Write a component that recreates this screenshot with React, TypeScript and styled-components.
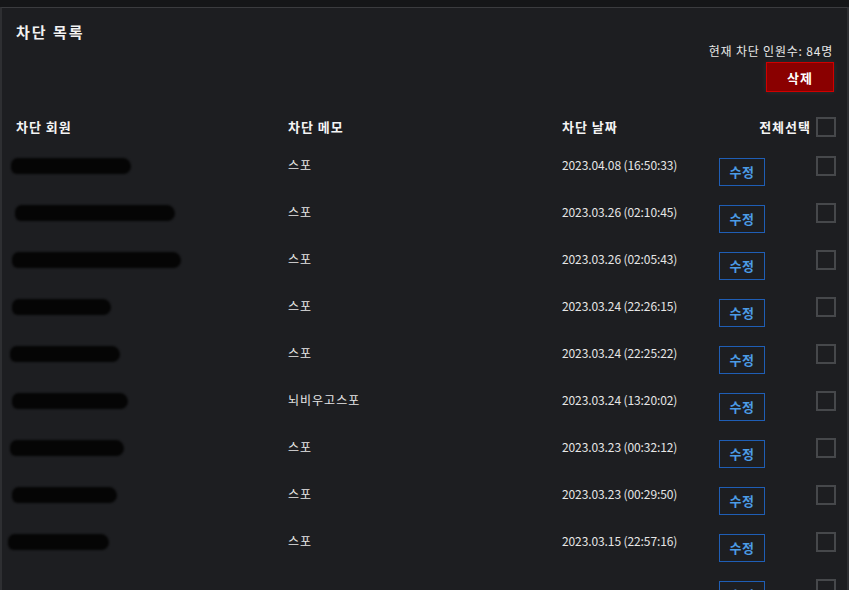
import React from "react";
import styled, { createGlobalStyle } from "styled-components";

const Global = createGlobalStyle`
  html, body { margin: 0; padding: 0; background: #151618; }
  body { font-family: "Noto Sans CJK KR", "Noto Sans", sans-serif; overflow: hidden; }
`;

const Page = styled.div`
  padding-top: 7px;
  width: 849px;
  height: 583px;
`;

const Panel = styled.div`
  background: #1d1e21;
  border-top: 1px solid #3b3c3f;
  border-left: 2px solid #2e2f32;
  border-right: 2px solid #2e2f32;
  padding: 15px 12px 0 14px;
  height: 100%;
  box-sizing: border-box;
  overflow: hidden;
`;

const Title = styled.h2`
  margin: 0;
  font-size: 15px;
  line-height: 18px;
  font-weight: 700;
  letter-spacing: 2px;
  color: #f2f2f2;
`;

const Meta = styled.div`
  display: flex;
  flex-direction: column;
  align-items: flex-end;
  margin-top: 2px;
`;

const Count = styled.div`
  font-size: 12px;
  line-height: 16px;
  color: #e8e8e8;
  letter-spacing: 0.8px;
  margin-right: 2px;
`;

const DeleteButton = styled.button`
  margin-top: 3px;
  width: 68px;
  height: 30px;
  background: #8a0000;
  border: 1px solid #d00000;
  color: #fff;
  font-family: inherit;
  font-size: 13px;
  font-weight: 700;
  letter-spacing: 1px;
  box-shadow: 0 0 6px rgba(255, 255, 255, 0.08);
  margin-right: 1px;
`;

const Row = styled.div<{ $header?: boolean }>`
  display: grid;
  grid-template-columns: 272px 274px 157px 97px 20px;
  align-items: center;
  height: ${(p) => (p.$header ? "20px" : "47px")};
  margin-top: ${(p) => (p.$header ? "25px" : "0")};
  margin-bottom: ${(p) => (p.$header ? "5px" : "0")};
`;

const HeadCell = styled.div`
  font-size: 13px;
  font-weight: 700;
  letter-spacing: 1px;
  color: #f4f4f4;
  line-height: 20px;
`;

const SelectAll = styled.div`
  grid-column: 4 / span 2;
  display: flex;
  justify-content: flex-end;
  align-items: center;
  gap: 5px;
`;

const Cell = styled.div`
  font-size: 12px;
  color: #e6e6e6;
  line-height: 16px;
  letter-spacing: 1px;
  white-space: nowrap;
  margin-top: -2px;
`;

const DateCell = styled(Cell)`
  letter-spacing: -0.1px;
`;

const Scribble = styled.div<{ $w: number; $x: number }>`
  width: ${(p) => p.$w}px;
  margin-left: ${(p) => p.$x}px;
  height: 16px;
  background: #050505;
  border-radius: 8px 10px 9px 7px;
  filter: blur(0.8px);
`;

const EditButton = styled.button`
  width: 46px;
  height: 28px;
  margin-top: 12px;
  background: transparent;
  border: 1px solid #1f5eb5;
  color: #4c9ce6;
  font-family: inherit;
  font-size: 13px;
  font-weight: 700;
  letter-spacing: 0.5px;
  padding: 0;
`;

const Check = styled.span`
  display: block;
  width: 20px;
  height: 20px;
  box-sizing: border-box;
  border: 2px solid #46484b;
`;

const rows = [
  { w: 120, x: -5, memo: "스포", date: "2023.04.08 (16:50:33)" },
  { w: 160, x: -1, memo: "스포", date: "2023.03.26 (02:10:45)" },
  { w: 169, x: -4, memo: "스포", date: "2023.03.26 (02:05:43)" },
  { w: 99, x: -4, memo: "스포", date: "2023.03.24 (22:26:15)" },
  { w: 110, x: -6, memo: "스포", date: "2023.03.24 (22:25:22)" },
  { w: 116, x: -4, memo: "뇌비우고스포", date: "2023.03.24 (13:20:02)" },
  { w: 114, x: -6, memo: "스포", date: "2023.03.23 (00:32:12)" },
  { w: 105, x: -4, memo: "스포", date: "2023.03.23 (00:29:50)" },
  { w: 101, x: -8, memo: "스포", date: "2023.03.15 (22:57:16)" },
  { w: 0, x: 0, memo: "", date: "" },
];

export default function App() {
  return (
    <>
      <Global />
      <Page>
        <Panel>
          <Title>차단 목록</Title>
          <Meta>
            <Count>현재 차단 인원수: 84명</Count>
            <DeleteButton>삭제</DeleteButton>
          </Meta>
          <Row $header>
            <HeadCell>차단 회원</HeadCell>
            <HeadCell>차단 메모</HeadCell>
            <HeadCell>차단 날짜</HeadCell>
            <SelectAll>
              <HeadCell>전체선택</HeadCell>
              <Check />
            </SelectAll>
          </Row>
          {rows.map((r, i) => (
            <Row key={i}>
              <Scribble $w={r.w} $x={r.x} />
              <Cell>{r.memo}</Cell>
              <DateCell>{r.date}</DateCell>
              <EditButton>수정</EditButton>
              <Check />
            </Row>
          ))}
        </Panel>
      </Page>
    </>
  );
}
